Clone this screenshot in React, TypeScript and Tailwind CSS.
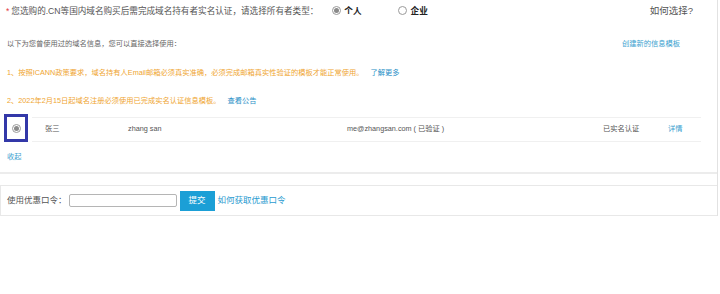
import React from "react";

function Radio({ checked }: { checked?: boolean }) {
  return (
    <span className="inline-flex h-[9px] w-[9px] items-center justify-center rounded-full border border-[#9a9a9a] bg-white">
      {checked ? <span className="h-[5px] w-[5px] rounded-full bg-[#8a8a8a]" /> : null}
    </span>
  );
}

export default function App() {
  return (
    <div
      className="h-[294px] w-[720px] bg-white text-[#333]"
      style={{ fontFamily: '"Liberation Sans", "Noto Sans CJK SC", sans-serif' }}
    >
      <div className="w-[718px] border-r border-[#e2e2e2]">
        {/* Row 1 */}
        <div className="flex h-[22px] items-center pl-[6px] pr-[24px] text-[8.6px]">
          <span className="text-[#e4393c]">*</span>
          <span className="ml-[2px] text-[#555]">
            您选购的.CN等国内域名购买后需完成域名持有者实名认证，请选择所有者类型：
          </span>
          <span className="ml-[14px] flex items-center gap-[3px]">
            <Radio checked />
            <span className="font-bold text-[#222]">个人</span>
          </span>
          <span className="ml-[36px] flex items-center gap-[4px]">
            <Radio />
            <span className="font-bold text-[#222]">企业</span>
          </span>
          <span className="ml-auto text-[9.5px] text-[#555]">如何选择?</span>
        </div>

        {/* Row 2 */}
        <div className="mt-[11px] flex h-[22px] items-center pl-[7px] pr-[37px] text-[7.25px] text-[#666]">
          <span>以下为您曾使用过的域名信息，您可以直接选择使用：</span>
          <span className="ml-auto text-[#3a9fcf]">创建新的信息模板</span>
        </div>

        {/* Notice 1 */}
        <div className="mt-[7px] flex h-[22px] items-center pl-[7px] text-[7.25px] text-[#efa530]">
          <span>1、按照ICANN政策要求，域名持有人Email邮箱必须真实准确，必须完成邮箱真实性验证的模板才能正常使用。</span>
          <span className="ml-[7px] text-[#2a8fc7]">了解更多</span>
        </div>

        {/* Notice 2 */}
        <div className="mt-[6px] flex h-[22px] items-center pl-[7px] text-[7.25px] text-[#efa530]">
          <span>2、2022年2月15日起域名注册必须使用已完成实名认证信息模板。</span>
          <span className="ml-[7px] text-[#2a8fc7]">查看公告</span>
        </div>

        {/* Table row */}
        <div className="mt-[2px] flex h-[28px]">
          <div className="ml-[4px] flex h-[28px] w-[24px] items-center justify-center border-[3px] border-[#3338a8]">
            <Radio checked />
          </div>
          <div className="ml-[4px] mr-[16px] mt-[3px] flex h-[25px] flex-1 items-center border-y border-[#f0f0f0] pl-[13px] text-[7.25px] text-[#555]">
            <span className="w-[83px]">张三</span>
            <span className="w-[219px]">zhang san</span>
            <span className="w-[256px]">me@zhangsan.com ( 已验证 )</span>
            <span className="w-[65px]">已实名认证</span>
            <span className="text-[#3a9fcf]">详情</span>
          </div>
        </div>

        {/* Collapse */}
        <div className="mt-[8px] flex h-[14px] items-center pl-[7px] text-[7.25px] text-[#3a9fcf]">
          收起
        </div>

        <div className="mt-[8px] h-[2px] bg-[#ececec]" />

        <div className="mt-[11px] flex h-[31px] items-center border-y border-l border-[#e8e8e8] pl-[6px] text-[8.5px] text-[#555]">
          <span>使用优惠口令：</span>
          <span className="ml-[2px] h-[13px] w-[108px] rounded-[2px] border border-[#b5b5b5] bg-white" />
          <span className="ml-[3px] flex h-[20px] w-[35px] items-center justify-center bg-[#1b9fd6] text-white">
            提交
          </span>
          <span className="ml-[3px] text-[#2a9bd0]">如何获取优惠口令</span>
        </div>
      </div>
    </div>
  );
}
